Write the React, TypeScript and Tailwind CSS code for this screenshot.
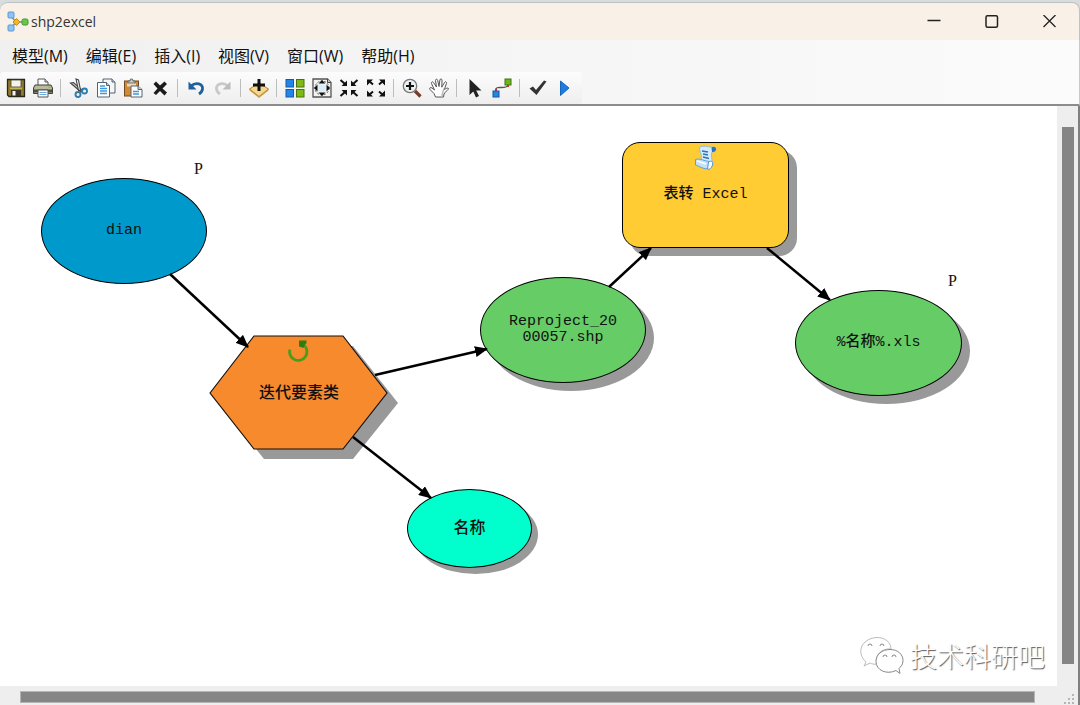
import React from 'react'

const Icon = (props:{children:any}) => (
  <svg viewBox="0 0 20 20" className="h-5 w-5" aria-hidden="true">{props.children}</svg>
)

const icons:any = {
  save: (
    <Icon>
      <path d="M1.500 1.500h17v17H3l-1.500-1.500z" fill="#8d7a2c" stroke="#2b2718" strokeWidth="1.300" />
      <rect x="5" y="2" width="10" height="7" fill="#f3f3ee" stroke="#4a431f" strokeWidth=".8" />
      <rect x="4" y="9.500" width="12" height="1.500" fill="#c7b35c" />
      <rect x="5" y="12" width="10" height="6" fill="#3a3626" />
      <rect x="6.500" y="13" width="3" height="4.500" fill="#f5f5f0" />
    </Icon>
  ),
  print: (
    <Icon>
      <path d="M5 8V1h7l3 3v4z" fill="#fff" stroke="#555" />
      <path d="M12 1v3h3" fill="#ddd" stroke="#555" />
      <path d="M2 7h16l1.500 3v5.500H.5V10z" fill="#b9bb9c" stroke="#3f4036" />
      <path d="M1 11.500h18v3H1z" fill="#4c4d43" />
      <rect x="15.500" y="8.500" width="2" height="1.500" fill="#7bc14a" />
      <path d="M5 12h10v7H5z" fill="#fff" stroke="#555" />
      <path d="M6.500 14.500h7M6.500 16.500h7" stroke="#69abe0" />
    </Icon>
  ),
  cut: (
    <Icon>
      <path d="M1.500 5l3-.5 9 8-2 1z" fill="#ccc" stroke="#444" strokeWidth="1.100" />
      <path d="M7 1l2.500 1 2 10-2 .5z" fill="#eee" stroke="#444" strokeWidth="1.100" />
      <circle cx="15.500" cy="13" r="2.500" fill="none" stroke="#2f7dad" strokeWidth="1.900" />
      <circle cx="9" cy="16.500" r="2.500" fill="none" stroke="#2f7dad" strokeWidth="1.900" />
    </Icon>
  ),
  copy: (
    <Icon>
      <path d="M7 1h9l3 3v11H7z" fill="#f4f6f8" stroke="#566270" />
      <path d="M16 1v3h3" fill="#ccd3da" stroke="#566270" />
      <path d="M1.500 4.500h9l3 3V19h-12z" fill="#fff" stroke="#566270" />
      <path d="M10.500 4.500v3h3" fill="#ccd3da" stroke="#566270" />
      <path d="M4 8h5M4 10.500h7M4 13h7M4 15.500h7" stroke="#3f98e0" strokeWidth="1.300" />
    </Icon>
  ),
  paste: (
    <Icon>
      <rect x="1.500" y="3" width="14" height="15" fill="#d18b36" stroke="#714b20" />
      <path d="M5 5V3h2l.5-2h2L10 3h2v2z" fill="#c9c9c9" stroke="#555" strokeWidth=".8" />
      <path d="M4 5.500h9v3H4z" fill="#ead9b8" />
      <path d="M8 8h7l4 3.500V19H8z" fill="#fff" stroke="#566270" />
      <path d="M15 8v3.500h4" fill="#ccd3da" stroke="#566270" />
      <path d="M10 13.500h6M10 16h6" stroke="#3f98e0" strokeWidth="1.400" />
    </Icon>
  ),
  remove: (
    <Icon>
      <path d="M3.500 6l2.500-2.500 4 4 4.500-4L17 6l-4.500 4.500 4.500 4-2.500 3-4.500-4.500-4 4L3.500 15l4-4.500z" fill="#1b1b1b" />
    </Icon>
  ),
  undo: (
    <Icon>
      <path d="M5 8c5-4.500 12-2 11.500 3-.3 2.500-2 4-3.500 5" fill="none" stroke="#20619c" strokeWidth="2.800" />
      <path d="M2.500 3.500v8h8z" fill="#20619c" />
    </Icon>
  ),
  redo: (
    <Icon>
      <path d="M15 8C10 3.500 3 6 3.500 11c.3 2.500 2 4 3.500 5" fill="none" stroke="#c9c9c9" strokeWidth="2.800" />
      <path d="M17.500 3.500v8h-8z" fill="#bdbdbd" />
    </Icon>
  ),
  add: (
    <Icon>
      <path d="M.5 11L10 5l9.500 6-9.500 7.500z" fill="#f6d68b" stroke="#a9842f" />
      <path d="M.5 11v1.500L10 20l9.500-7.500V11L10 18.500z" fill="#c79d44" />
      <path d="M8.500 1h3v4.500H16v3h-4.500V13h-3V8.500H4v-3h4.500z" fill="#111" />
    </Icon>
  ),
  layout: (
    <Icon>
      <rect x="1" y="1.500" width="7.500" height="7.500" fill="#2185ea" stroke="#145bab" />
      <rect x="11.500" y="1.500" width="7.500" height="7.500" fill="#7eba16" stroke="#477607" />
      <rect x="1" y="11.500" width="7.500" height="7.500" fill="#2185ea" stroke="#145bab" />
      <rect x="11.500" y="11.500" width="7.500" height="7.500" fill="#7eba16" stroke="#477607" />
    </Icon>
  ),
  full: (
    <Icon>
      <path d="M1 1h14.500L19 4.500V19H1z" fill="#f3f3f3" stroke="#555" strokeWidth="1.300" />
      <path d="M15.500 1v3.500H19" fill="#ccc" stroke="#444" />
      <circle cx="10" cy="10" r="7" fill="none" stroke="#555" strokeDasharray="2 1.500" />
      <rect x="6.500" y="6.500" width="7" height="7" fill="#d9edf9" />
      <path d="M10 2l3.500 3.500h-7zM10 18l-3.500-3.500h7zM2 10l3.500-3.500v7zM18 10l-3.500 3.500v-7z" fill="#111" />
    </Icon>
  ),
  shrink: (
    <Icon>
      <path d="M1.500 2L6 6M18.500 2L14 6M1.500 18L6 14M18.500 18L14 14" stroke="#111" strokeWidth="2" />
      <path d="M8 2.500V8H2.500zM12 2.500V8h5.500zM8 17.500V12H2.500zM12 17.500V12h5.500z" fill="#111" />
    </Icon>
  ),
  expand: (
    <Icon>
      <path d="M3 3l4 3.500M17 3l-4 3.500M3 17l4-3.500M17 17l-4-3.500" stroke="#111" strokeWidth="2" />
      <path d="M1 1.500h6l-6 6zM19 1.500h-6l6 6zM1 18.500h6l-6-6zM19 18.500h-6l6-6z" fill="#111" />
    </Icon>
  ),
  zoom: (
    <Icon>
      <path d="M13 13l5.500 5.500" stroke="#7b3b2c" strokeWidth="3.200" />
      <circle cx="8" cy="8" r="6.700" fill="#eef1f2" stroke="#777" strokeWidth="1.300" />
      <path d="M8 4v8M4 8h8" stroke="#111" strokeWidth="2.200" />
    </Icon>
  ),
  pan: (
    <Icon>
      <path d="M6.500 19L5 15.500 1 11.500c-1-1.500.5-2.500 2-1.500l2.500 2L2.500 5.500c-.5-1.700 1.300-2.300 2-1L7.500 9 6.500 2.500c0-1.700 1.900-1.700 2.200 0L10 8.500l.9-6.500c.3-1.600 2.100-1.300 2.100.2l-.2 7 2.700-4.700c.8-1.500 2.500-.7 2 .8l-2.300 6.500c1.500-1.300 3.800-2.300 4.300-1.300.3.800-3 3-4.500 5.500l-.5 3z" fill="#fff" stroke="#555" />
      <path d="M15 10.500c-1 3-2 5.500-2 8" stroke="#bbb" strokeWidth="1.500" fill="none" />
    </Icon>
  ),
  select: (
    <Icon>
      <path d="M4.500 1v16l3.800-3.500 2.700 6 3-1.500-2.800-5.500h5.300z" fill="#222" />
    </Icon>
  ),
  connect: (
    <Icon>
      <path d="M4 12c0-3 2-2.500 5-2.500s7 0 7-2.500" fill="none" stroke="#555" strokeWidth="1.300" />
      <path d="M4 10.500v3M16 6v3" stroke="#e02020" strokeWidth="1.800" />
      <rect x="1" y="13" width="6" height="6" fill="#2186e8" stroke="#1757a0" />
      <rect x="13" y="1" width="6" height="6" fill="#6db51c" stroke="#41720d" />
    </Icon>
  ),
  check: (
    <Icon>
      <path d="M1.500 10.500l3.500-2 3 3.500L16 2.500l2.500 1L8.500 17z" fill="#333" />
    </Icon>
  ),
  run: (
    <Icon>
      <path d="M5.500 3l8.500 7-8.500 7.500z" fill="#1f7be0" stroke="#1665bd" />
    </Icon>
  ),
}

const toolGroups = [
  [['save', '保存'], ['print', '打印']],
  [['cut', '剪切'], ['copy', '复制'], ['paste', '粘贴'], ['remove', '删除']],
  [['undo', '撤消'], ['redo', '重做']],
  [['add', '添加数据或工具']],
  [['layout', '自动布局'], ['full', '全图'], ['shrink', '固定比例缩小'], ['expand', '固定比例放大']],
  [['zoom', '放大'], ['pan', '平移']],
  [['select', '选择'], ['connect', '连接']],
  [['check', '验证整个模型'], ['run', '运行']],
]

const menus = ['模型(M)', '编辑(E)', '插入(I)', '视图(V)', '窗口(W)', '帮助(H)']

const TitleBar = () => (
  <header className="flex h-[38px] shrink-0 items-center justify-between rounded-t-lg border-t border-r border-[#bfc2c2] bg-[#f9f1e8] pl-[7px]">
    <div className="flex items-center gap-[2px]">
      <svg viewBox="0 0 22 22" className="h-[22px] w-[22px]" aria-hidden="true">
        <path d="M4 5l5 6-5 6M9 11h7" fill="none" stroke="#8a8d75" strokeWidth="1.500" />
        <rect x="1" y="1" width="6" height="6" rx="1" fill="#8fc3f3" stroke="#5b98d6" />
        <rect x="1" y="14" width="6" height="6" rx="1" fill="#8fc3f3" stroke="#5b98d6" />
        <path d="M9.500 7.500l3.500 3.500-3.500 3.500L6 11z" fill="#f5b824" stroke="#c48a13" />
        <rect x="15" y="8" width="6" height="6" rx="1.500" fill="#69c84c" stroke="#3c9a2c" />
      </svg>
      <h1 className="text-sm text-[#333]">shp2excel</h1>
    </div>
    <div className="flex h-full text-[#222]">
      <button aria-label="最小化" className="flex w-[58px] items-center justify-center">
        <svg viewBox="0 0 14 14" className="h-3.5 w-3.5"><path d="M.5 5.500h13" stroke="currentColor" strokeWidth="1.500" /></svg>
      </button>
      <button aria-label="最大化" className="flex w-[58px] items-center justify-center">
        <svg viewBox="0 0 14 14" className="h-3.5 w-3.5"><rect x="1" y="0.750" width="11.500" height="11.500" rx="1.500" fill="none" stroke="currentColor" strokeWidth="1.500" /></svg>
      </button>
      <button aria-label="关闭" className="flex w-[58px] items-center justify-center">
        <svg viewBox="0 0 14 14" className="h-3.5 w-3.5"><path d="M.5 0l12 12M12.500 0L.5 12" stroke="currentColor" strokeWidth="1.300" /></svg>
      </button>
    </div>
  </header>
)

const ToolBar = () => (
  <div className="flex h-8 w-fit items-center rounded bg-linear-to-b from-[#fcfcfc] to-[#eeeeee] pr-1 pl-0.5">
    {toolGroups.map((group, i) => (
      <React.Fragment key={i}>
        {i > 0 && <span className="mx-1 h-[18px] w-px bg-[#bdbdbd]" />}
        {group.map(([name, label]) => (
          <button key={name} aria-label={label} className="flex h-7 w-[27px] items-center justify-center">
            {icons[name]}
          </button>
        ))}
      </React.Fragment>
    ))}
  </div>
)

const Node = (props:{className:string, children:any}) => (
  <div className={`absolute flex items-center justify-center border border-black text-center ${props.className}`}>
    {props.children}
  </div>
)

const Diagram = () => (
  <main className="relative flex-1 overflow-hidden bg-white font-['Liberation_Mono','Noto_Sans_CJK_SC',monospace] text-[15px] leading-4 font-medium text-[#111]">
    <Node className="top-[72px] left-[41px] h-[106px] w-[166px] rounded-[50%] bg-[#0099cc]">dian</Node>
    <span className="absolute top-[55px] left-[194px] font-['Liberation_Serif',serif] text-base leading-4">P</span>

    <div className="absolute top-[229px] left-[209px] h-[126px] w-[190px]">
      <svg viewBox="0 0 190 126" className="h-full w-full" aria-hidden="true">
        <path d="M10 68l45-57h89l45 57-45 56H55z" fill="#999" />
        <path d="M1 58l44-57h89l44 57-44 56H45z" fill="#f78a2d" stroke="#111" strokeWidth="1.200" />
        <path d="M80.800 14.500a8.700 8.700 0 1 0 14-4.500" fill="none" stroke="#4e9a1c" strokeWidth="2.800" />
        <path d="M90 5.500h7.500v2.500l-2 2.500-1 2.500-4.500-1.500z" fill="#2f7d12" />
      </svg>
      <span className="absolute top-[51px] left-0 w-[180px] text-center text-base leading-4">迭代要素类</span>
    </div>

    <Node className="top-[171px] left-[480px] h-[106px] w-[166px] rounded-[50%] bg-[#66cc66] shadow-[8px_8px_0_#999]">
      Reproject_20<br />00057.shp
    </Node>

    <Node className="top-[36px] left-[622px] h-[106px] w-[167px] rounded-[18px] bg-[#ffcc33] shadow-[8px_8px_0_#999]">
      <svg viewBox="0 0 24 26" className="absolute top-[2px] left-[71px] h-[26px] w-6" aria-hidden="true">
        <path d="M6 2c4-2 9 .5 13 0 2 0 3 1 3 2.500S20 7 18 7c-2 5 2 9-1 15L5 17l2-3C9 10 4 5 6 2z" fill="#d6ebfc" stroke="#8cbde8" />
        <path d="M17.500 2.500c2-1 4.500-.5 4.500 1.500S20 7.500 18 7z" fill="#2572c4" />
        <path d="M1.500 14.500c4-1.500 9 1.500 14 2v7C10 25 5 21 1.500 20z" fill="#c3e2fa" stroke="#5c9fdb" />
        <path d="M14.500 17c3-2 5 0 4 3s-3 5-5 4z" fill="#fff" stroke="#4c94d6" />
        <path d="M3 16l9 3" stroke="#fff" strokeWidth="1.500" />
        <path d="M8 6l6 1M9 9l5 1M9 12l6 1.500" stroke="#2c73b8" strokeWidth="1.500" />
      </svg>
      表转 Excel
    </Node>

    <Node className="top-[184px] left-[795px] h-[106px] w-[167px] rounded-[50%] bg-[#66cc66] shadow-[8px_8px_0_#999]">%名称%.xls</Node>
    <span className="absolute top-[167px] left-[948px] font-['Liberation_Serif',serif] text-base leading-4">P</span>

    <Node className="top-[383px] left-[407px] h-[79px] w-[125px] rounded-[50%] bg-[#00ffcc] text-base leading-4 shadow-[6px_6px_0_#999]">名称</Node>

    <svg className="pointer-events-none absolute inset-0 h-full w-full" aria-hidden="true">
      <defs>
        <marker id="arrow" markerUnits="userSpaceOnUse" markerWidth="13" markerHeight="11" refX="12" refY="5.5" orient="auto">
          <path d="M0 0L13 5.500L0 11z" fill="#000" />
        </marker>
      </defs>
      <g stroke="#000" strokeWidth="2.500">
        <line x1="170" y1="168" x2="248" y2="241" markerEnd="url(#arrow)" />
        <line x1="375" y1="269" x2="487" y2="243" markerEnd="url(#arrow)" />
        <line x1="353" y1="331" x2="431" y2="392" markerEnd="url(#arrow)" />
        <line x1="609" y1="181" x2="651" y2="142" markerEnd="url(#arrow)" />
        <line x1="767" y1="142" x2="830" y2="194" markerEnd="url(#arrow)" />
      </g>
    </svg>

    <div className="absolute right-3 bottom-2.5 flex items-center gap-1.5 font-['Noto_Sans_CJK_SC',sans-serif] text-[27px] leading-10 font-light text-white [text-shadow:1px_1px_1px_#555]">
      <svg viewBox="0 0 46 40" className="h-10 w-[46px]" fill="#fff" stroke="#bbb" aria-hidden="true">
        <path d="M8 26C-2 17 3 3 18 1.500c9-.5 15 5 15 11.500-9-1-17 6-14 15-3 .5-5 0-7-1l-6 3z" />
        <path d="M38 34.500c-9 4.500-20 0-20-9 0-7 6-12 14-12s13 5 13 11c0 4-2 6-4 8l1 5z" stroke="#888" />
        <path d="M10 10a2 2 0 0 1 4 0M22 10a2 2 0 0 1 4 0M25 21a2 2 0 0 1 4 0M34 21a2 2 0 0 1 4 0" fill="none" stroke="#888" />
      </svg>
      <span>技术科研吧</span>
    </div>
  </main>
)

const App = () => {
  return (
    <div className="flex h-screen min-h-[600px] flex-col bg-[#d9dcdc] pt-[2px] font-['Open_Sans','Noto_Sans_CJK_SC',sans-serif]">
      <TitleBar />
      <div className="shrink-0 border-r border-b-2 border-r-[#c9c9c9] border-b-[#8c8c8c] bg-linear-to-r from-[#f0f0f0] to-[#fbfbfb]">
        <nav className="flex h-8 items-center gap-[18px] pl-3 text-base text-[#111]">
          {menus.map((menu) => (
            <button key={menu}>{menu}</button>
          ))}
        </nav>
        <ToolBar />
      </div>
      <div className="flex min-h-0 flex-1 border-r-2 border-[#808080] bg-[#eeeeee]">
        <div className="flex min-w-0 flex-1 flex-col">
          <Diagram />
          <div className="h-[19px] shrink-0 pt-[5px] pr-[22px] pl-5">
            <div className="h-3 border border-[#b5b5b5] bg-[#858585]" />
          </div>
        </div>
        <div className="flex w-[21px] shrink-0 flex-col items-center pt-[21px]">
          <div className="w-3 flex-1 bg-[#858585]" />
          <div className="flex h-[41px] w-full items-end justify-end pr-1 pb-px">
            <svg viewBox="0 0 10 10" className="h-2.5 w-2.5" fill="#b5b5b5" aria-hidden="true">
              <path d="M8 0h2v2H8zM8 4h2v2H8zM8 8h2v2H8zM4 4h2v2H4zM4 8h2v2H4zM0 8h2v2H0z" />
            </svg>
          </div>
        </div>
      </div>
    </div>
  )
}

export default App
